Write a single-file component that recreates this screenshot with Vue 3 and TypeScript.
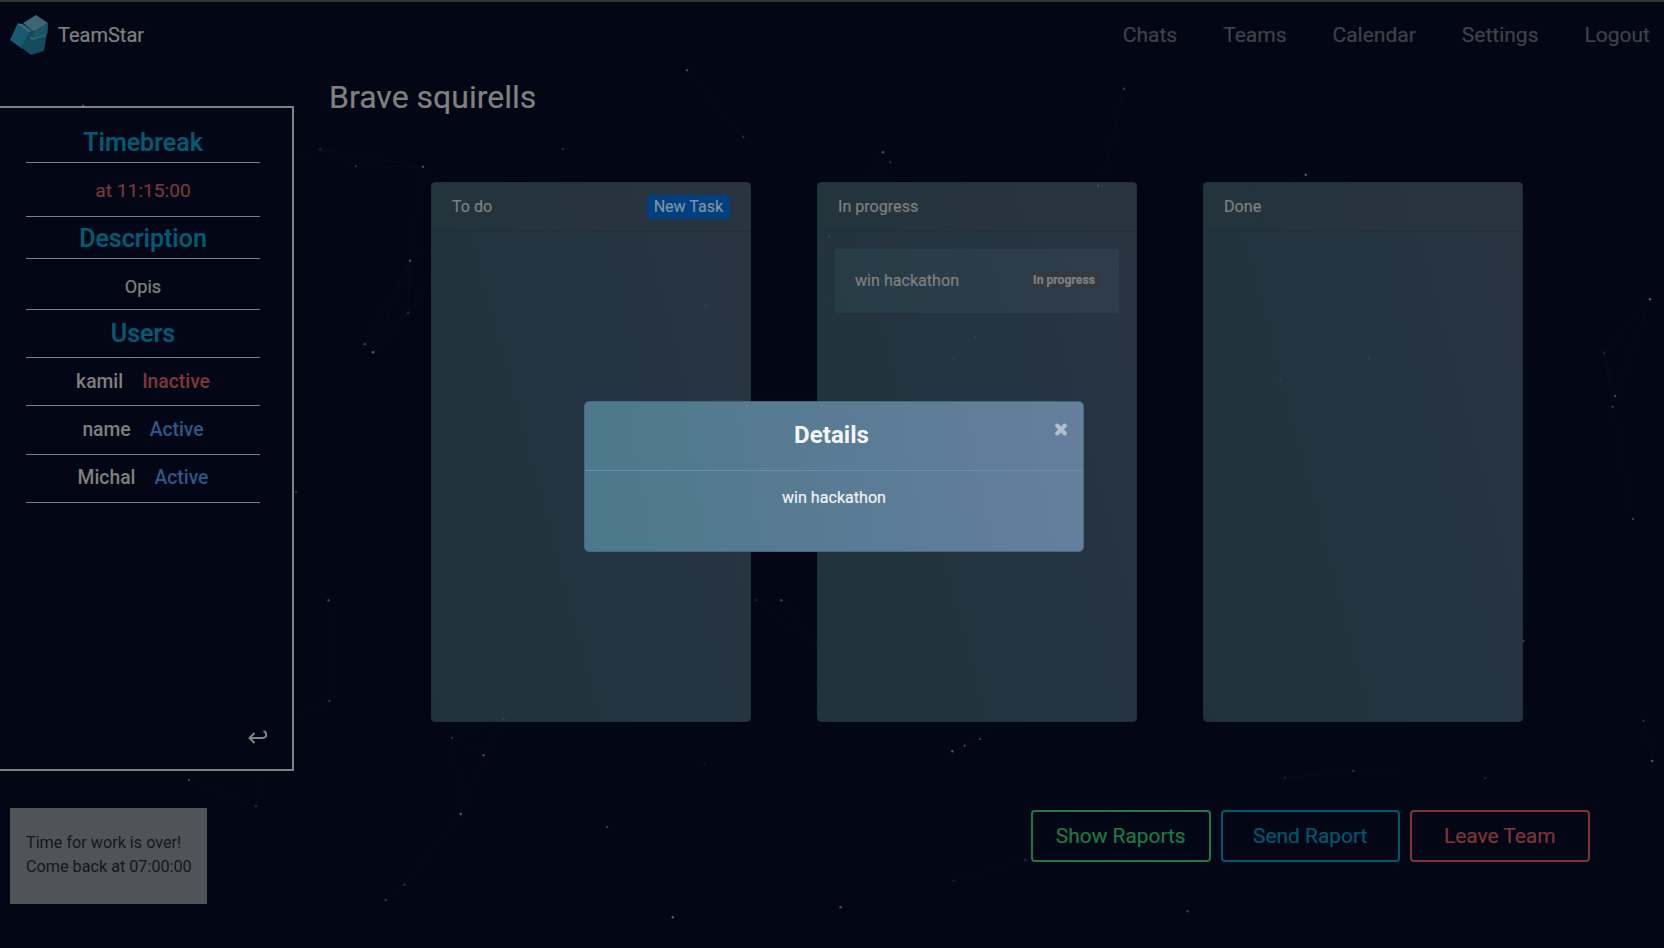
<script setup lang="ts">
interface Member {
  name: string
  active: boolean
}
interface Task {
  title: string
  status: string
}
interface Column {
  title: string
  canAdd: boolean
  tasks: Task[]
}

const links: string[] = ['Chats', 'Teams', 'Calendar', 'Settings', 'Logout']

const members: Member[] = [
  { name: 'kamil', active: false },
  { name: 'name', active: true },
  { name: 'Michal', active: true },
]

const columns: Column[] = [
  { title: 'To do', canAdd: true, tasks: [] },
  { title: 'In progress', canAdd: false, tasks: [{ title: 'win hackathon', status: 'In progress' }] },
  { title: 'Done', canAdd: false, tasks: [] },
]

const actions = [
  { label: 'Show Raports', tone: 'success' },
  { label: 'Send Raport', tone: 'info' },
  { label: 'Leave Team', tone: 'danger' },
]

// x, y, opacity
const stars: [number, number, number][] = [
  [687, 70.3, 0.3], [743.3, 136.7, 0.16], [563, 149, 0.18], [320.3, 149.3, 0.14], [355.7, 166.3, 0.15],
  [423, 166.7, 0.32], [410, 260.7, 0.34], [408.3, 312.7, 0.16], [364.7, 344.3, 0.28], [373, 352.3, 0.42],
  [464.3, 227.7, 0.05], [705.3, 306, 0.07], [883, 152.3, 0.35], [890.3, 162, 0.18], [1098.3, 185.7, 0.14],
  [829, 236.7, 0.1], [832, 303.7, 0.06], [975.3, 337, 0.08], [953.7, 358.3, 0.08], [1124, 88.7, 0.24],
  [1305.8, 174.7, 0.42], [328.6, 600.3, 0.3], [329.5, 701, 0.22], [755.8, 600.3, 0.12], [781.3, 600.3, 0.28],
  [503.6, 719, 0.1], [451.8, 737.7, 0.18], [483.5, 755.3, 0.32], [460.7, 814, 0.42], [607.2, 827, 0.26],
  [404.5, 884.7, 0.2], [385.7, 900, 0.22], [672.8, 917.3, 0.42], [840.6, 907.3, 0.35], [952.3, 751.3, 0.38],
  [964.7, 745.7, 0.26], [980, 739, 0.24], [953.6, 880.7, 0.12], [704.5, 764.3, 0.07], [826, 659, 0.04],
  [1650, 299.3, 0.42], [1604, 352.7, 0.12], [1615.1, 396, 0.28], [1612.6, 406.7, 0.24], [1633, 519, 0.24],
  [1368.7, 358.3, 0.07], [1280.2, 380, 0.07], [1523.6, 641, 0.2], [1248.2, 677.7, 0.05], [1643.5, 720.7, 0.18],
  [1652.2, 761, 0.4], [1353.2, 770.7, 0.18], [1284.5, 777.7, 0.12], [1485.3, 778.3, 0.14], [1025.4, 860, 0.18],
  [1187.6, 911.3, 0.26], [189, 780, 0.25], [256, 806.3, 0.16], [83, 105.7, 0.3], [296, 491.7, 0.2],
]

const threads: [number, number, number, number][] = [
  [294, 158, 320, 149], [320, 149, 356, 166], [320, 149, 423, 167], [356, 166, 423, 167], [423, 167, 433, 181],
  [423, 167, 410, 261], [410, 261, 431, 248], [410, 261, 408, 313], [410, 261, 365, 344], [410, 261, 373, 352],
  [408, 313, 365, 344], [408, 313, 373, 352], [365, 344, 373, 352], [408, 313, 431, 278], [687, 70, 743, 137],
  [329, 600, 329, 701], [300, 714, 329, 701], [452, 738, 504, 719], [452, 738, 484, 755], [484, 755, 504, 719],
  [452, 738, 461, 814], [484, 755, 461, 814], [461, 814, 404, 885], [404, 885, 386, 900],
  [756, 600, 781, 600], [756, 600, 817, 648], [781, 600, 817, 644],
  [952, 751, 965, 746], [965, 746, 980, 739], [980, 739, 992, 723], [954, 881, 1025, 860],
  [1124, 89, 1102, 181], [1286, 181, 1306, 175], [865, 181, 883, 152], [870, 181, 890, 162],
  [1650, 299, 1604, 353], [1650, 299, 1615, 396], [1604, 353, 1615, 396], [1604, 353, 1613, 407],
  [1613, 407, 1633, 519], [1644, 721, 1652, 761], [1285, 778, 1353, 771], [1353, 771, 1400, 773],
  [180, 771, 189, 780], [189, 780, 256, 806], [256, 806, 266, 771],
]
</script>

<template>
  <div class="page">
    <header class="navbar">
      <svg class="logo" width="38" height="41" viewBox="0 0 38 41">
        <path d="M7.5 8.5 13 9l10 7-3 8-7.500 10L0 25z" fill="#1a5972" />
        <path d="M13 8 26 0l12 8-14 9z" fill="#3d6575" />
        <path d="M24 17 38 8l-.5 11-17 4z" fill="#1b576b" />
        <path d="m20 16 4 1-3 6-8 11-2-2z" fill="#144a5c" />
        <path d="M20 22 37 18.500 34 36 21 40 12 33z" fill="#134b5d" />
        <path d="m20 21 3 1.500 13-3v1.500l-14 4-2-1.500z" fill="#346373" />
        <path d="m7.500 8.500 4 .5 9 7-2 1z" fill="#456b7b" />
      </svg>
      <span class="brand">TeamStar</span>
      <nav class="links">
        <a v-for="link in links" :key="link">{{ link }}</a>
      </nav>
    </header>

    <div class="layout">
      <div class="left">
        <aside class="sidebar">
          <div class="row heading first">Timebreak</div>
          <div class="row break">at 11:15:00</div>
          <div class="row heading second">Description</div>
          <div class="row about">Opis</div>
          <div class="row heading third">Users</div>
          <div v-for="m in members" :key="m.name" class="row member">
            <span>{{ m.name }}</span>
            <span :class="m.active ? 'on' : 'off'">{{ m.active ? 'Active' : 'Inactive' }}</span>
          </div>
          <svg class="collapse" width="20" height="15" viewBox="0 0 20 15">
            <path d="M1.500 8h13.200c2.600 0 3.600-1.700 3.500-3.300 0-1.600-.8-3-2.700-3.500M6.500 3 1.500 8l5 5" fill="none" stroke="#868686" stroke-width="1.900" />
          </svg>
        </aside>
        <div class="notice">Time for work is over!<br />Come back at 07:00:00</div>
      </div>

      <main class="content">
        <h1 class="title">Brave squirells</h1>
        <div class="board">
          <section v-for="col in columns" :key="col.title" class="column">
            <div class="column-head">
              <span>{{ col.title }}</span>
              <button v-if="col.canAdd" class="add">New Task</button>
            </div>
            <div class="column-body">
              <div v-for="task in col.tasks" :key="task.title" class="task">
                <span>{{ task.title }}</span>
                <span class="badge">{{ task.status }}</span>
              </div>
            </div>
          </section>
        </div>
        <div class="actions">
          <button v-for="a in actions" :key="a.label" class="action" :class="a.tone">{{ a.label }}</button>
        </div>
      </main>
    </div>

    <svg class="sky" width="1664" height="948" viewBox="0 0 1664 948">
      <line v-for="(t, i) in threads" :key="'t' + i" :x1="t[0]" :y1="t[1]" :x2="t[2]" :y2="t[3]" stroke="#fff" stroke-opacity="0.018" />
      <circle v-for="(s, i) in stars" :key="'s' + i" :cx="s[0]" :cy="s[1]" r="1.200" fill="#fff" :fill-opacity="s[2] * 0.85" />
    </svg>

    <div class="overlay">
      <div class="modal">
        <div class="modal-head">
          <span class="modal-title">Details</span>
          <svg class="close" width="12" height="13" viewBox="0 0 12 13">
            <path d="m2.200 2.500 7.600 8M9.800 2.500l-7.600 8" stroke="#afc0ca" stroke-width="4" stroke-linecap="round" />
          </svg>
        </div>
        <div class="modal-body">win hackathon</div>
      </div>
    </div>
  </div>
</template>

<style>
html,
body {
  margin: 0;
  background: #030615;
}
</style>

<style scoped>
.page {
  position: relative;
  box-sizing: border-box;
  width: 1664px;
  height: 948px;
  overflow: hidden;
  background: #030615;
  border-top: 2px solid #333333;
  color: #7f8080;
  font-family: Roboto, sans-serif;
  font-size: 16.1px;
  -webkit-text-stroke: 0.22px currentColor;
}
.navbar {
  display: flex;
  align-items: center;
  height: 66px;
  padding: 0 14px 0 10px;
}
.logo {
  display: block;
}
.brand {
  margin-left: 10px;
  font-size: 20px;
}
.links {
  display: flex;
  gap: 46px;
  margin-left: auto;
  font-size: 21px;
  line-height: 25px;
  padding-top: 1px;
  color: #404149;
}
.layout {
  display: grid;
  grid-template-columns: 294px 1fr;
}
.left {
  padding-top: 38px;
}
.sidebar {
  box-sizing: border-box;
  display: flex;
  flex-direction: column;
  height: 665px;
  padding: 0 32px 0 26px;
  border: 2px solid #808080;
  border-left: 0;
}
.row {
  box-sizing: border-box;
  display: flex;
  align-items: center;
  justify-content: center;
  height: 48px;
  border-bottom: 1px solid #808080;
  font-size: 19.2px;
}
.heading {
  color: #005c75;
  font-size: 25px;
  font-weight: 500;
}
.first {
  height: 55px;
  padding-top: 14px;
}
.break {
  height: 54px;
  padding-top: 2px;
  color: #7c3539;
}
.second {
  height: 42px;
  padding-top: 1px;
}
.about {
  height: 51px;
  padding-top: 4px;
  font-size: 18.1px;
}
.member {
  gap: 19px;
  font-size: 19.3px;
  font-weight: 500;
  -webkit-text-stroke: 0;
}
.member:nth-of-type(7) {
  height: 49px;
  padding-bottom: 1px;
}
.member:nth-of-type(8) {
  padding-bottom: 3px;
}
.on {
  color: #2f5687;
}
.off {
  color: #803739;
}
.collapse {
  align-self: flex-end;
  margin: auto -8px 24px 0;
}
.notice {
  box-sizing: border-box;
  width: 197px;
  height: 96px;
  margin: 37px 0 0 10px;
  padding: 23px 16px;
  background: #505358;
  color: #14181b;
  font-size: 16.2px;
  line-height: 24px;
  white-space: nowrap;
  -webkit-text-stroke: 0;
}
.content {
  padding-left: 35px;
}
.title {
  margin: 9px 0 0;
  font-size: 32px;
  font-weight: 400;
  line-height: 40px;
}
.board {
  display: grid;
  grid-template-columns: repeat(3, 320px);
  gap: 66px;
  margin: 65px 0 0 102px;
}
.column {
  box-sizing: border-box;
  height: 540px;
  border: 1px solid #20303a;
  border-radius: 4px;
  background: linear-gradient(75deg, #20333c, #243441 55%, #293441);
}
.column-head {
  box-sizing: border-box;
  display: flex;
  align-items: center;
  justify-content: space-between;
  height: 49px;
  padding: 0 20px 1px;
  border-bottom: 1px solid #202f3a;
  border-radius: 3px 3px 0 0;
  background: linear-gradient(75deg, #22343c, #27333f 55%, #293441);
}
.add {
  height: 24px;
  padding: 0 7px;
  border: 0;
  border-radius: 3px;
  background: #004081;
  color: #8091a0;
  font: 16px Roboto, sans-serif;
}
.column-body {
  padding: 17px;
}
.task {
  box-sizing: border-box;
  display: flex;
  align-items: center;
  justify-content: space-between;
  height: 64px;
  padding: 0 20px 2px;
  border-radius: 3px;
  background: linear-gradient(75deg, #263d46, #2b3c48 50%, #303d4d);
}
.badge {
  width: 70px;
  border-radius: 4px;
  background: #343a40;
  font-size: 12.2px;
  font-weight: 700;
  line-height: 17px;
  text-align: center;
  white-space: nowrap;
}
.actions {
  display: flex;
  gap: 10px;
  margin: 88px 0 0 702px;
}
.action {
  box-sizing: border-box;
  width: 179.500px;
  height: 52px;
  padding: 0;
  border: 2px solid currentColor;
  border-radius: 4px;
  background: transparent;
  font: 20.9px Roboto, sans-serif;
}
.success {
  color: #1f7846;
}
.info {
  color: #00586f;
}
.danger {
  color: #7f3537;
}
.sky {
  position: absolute;
  top: -2px;
  left: 0;
  pointer-events: none;
}
.overlay {
  position: absolute;
  inset: 0;
  display: flex;
  justify-content: center;
  align-items: flex-start;
  padding: 399px 0 0 4px;
}
.modal {
  box-sizing: border-box;
  width: 500px;
  height: 151px;
  border: 1px solid #456a7d;
  border-radius: 5px;
  background: linear-gradient(80deg, #4b798a, #587b94 45%, #657f9d);
}
.modal-head {
  display: flex;
  justify-content: center;
  align-items: flex-start;
  box-sizing: border-box;
  height: 69px;
  padding: 17px 16px 0 15px;
  border-bottom: 1px solid #668db7;
}
.modal-title {
  flex: 1;
  padding-left: 8px;
  color: #f3f5f6;
  font-size: 24.1px;
  font-weight: 700;
  line-height: 32px;
  text-align: center;
  -webkit-text-stroke: 0;
}
.close {
  margin-top: 4px;
}
.modal-body {
  padding-top: 15px;
  color: #eef2f4;
  line-height: 24px;
  text-align: center;
}
</style>
